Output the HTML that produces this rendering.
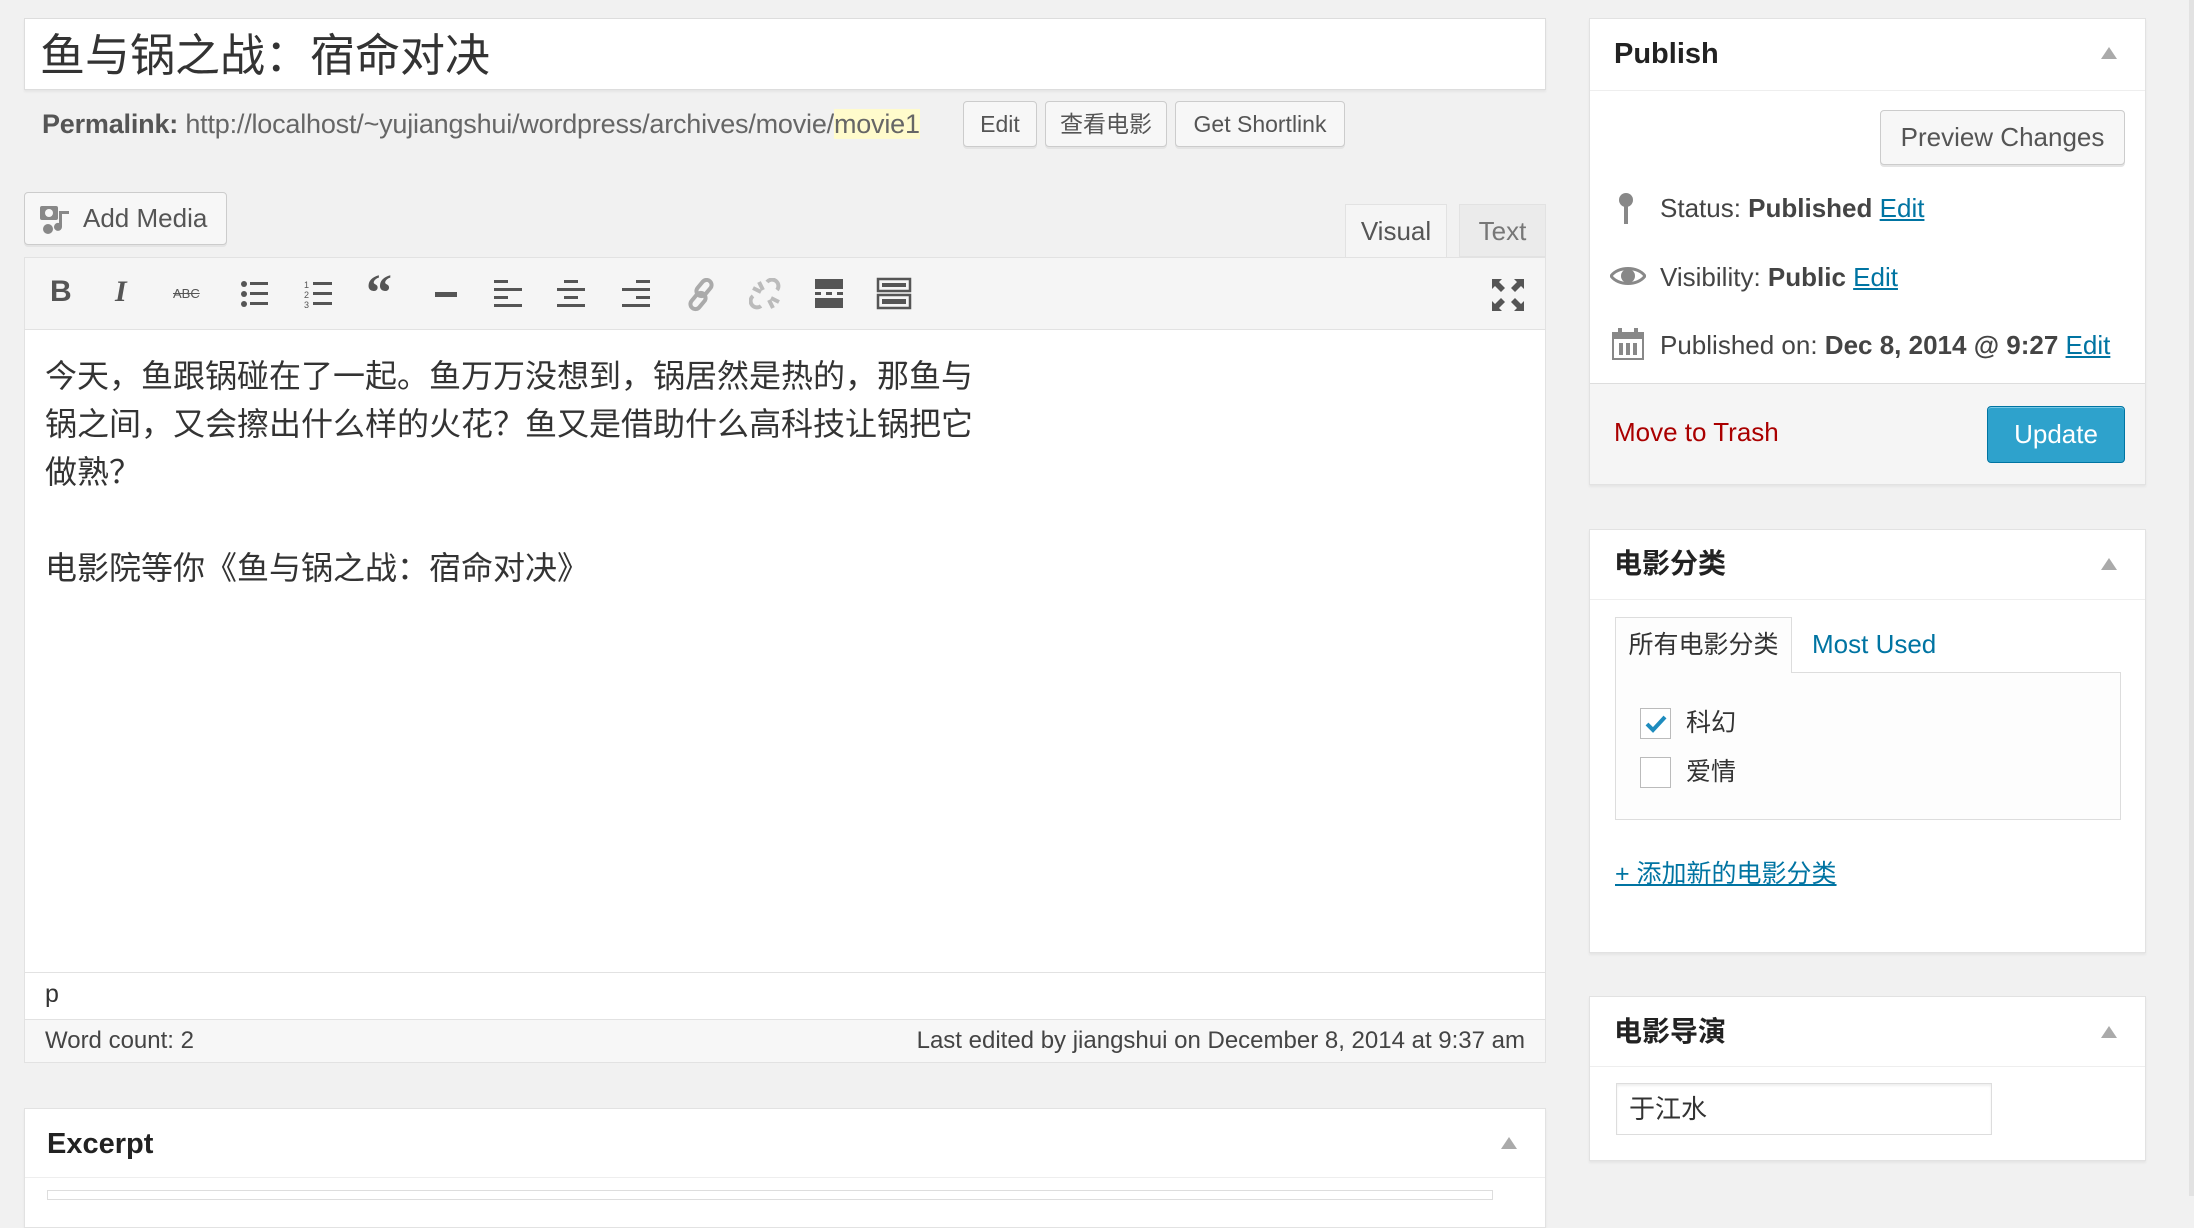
<!DOCTYPE html>
<html><head><meta charset="utf-8"><style>
*{box-sizing:border-box;margin:0;padding:0}
body{width:2194px;height:1196px;background:#f1f1f1;position:relative;overflow:hidden;font-family:"Liberation Sans","Noto Sans CJK SC",sans-serif;color:#444}
.a{position:absolute}
.box{position:absolute;background:#fff;border:1px solid #e2e2e2;box-shadow:0 2px 2px rgba(0,0,0,.05)}
.btn{position:absolute;background:#f7f7f7;border:1px solid #ccc;border-radius:4px;box-shadow:0 2px 0 #e4e4e4;color:#555;font-size:23px;text-align:center}
.ic{position:absolute;top:276px}
a{color:#0074a2;text-decoration:underline}
.tri{position:absolute;width:0;height:0;border-left:8px solid transparent;border-right:8px solid transparent;border-bottom:12px solid #aaa}
</style></head><body>

<div class="box" style="left:24px;top:18px;width:1522px;height:72px;border-color:#ddd"></div>
<div class="a" style="left:40px;top:26px;font-size:45px;color:#333;line-height:60px">鱼与锅之战：宿命对决</div>

<div class="a" style="left:42px;top:106px;font-size:27px;line-height:36px;color:#666;white-space:nowrap;letter-spacing:-0.2px"><b style="color:#555">Permalink:</b> http://localhost/~yujiangshui/wordpress/archives/movie/<span style="background:#fffbcc">movie1</span></div>
<div class="btn" style="left:963px;top:101px;width:74px;height:46px;line-height:44px">Edit</div>
<div class="btn" style="left:1045px;top:101px;width:122px;height:46px;line-height:44px">查看电影</div>
<div class="btn" style="left:1175px;top:101px;width:170px;height:46px;line-height:44px">Get Shortlink</div>

<div class="btn" style="left:24px;top:192px;width:203px;height:53px;line-height:51px;font-size:26px;text-align:left;padding-left:58px">Add Media</div>
<svg class="a" style="left:38px;top:203px" width="36" height="34" viewBox="0 0 36 34"><rect x="2" y="3" width="18" height="14" rx="2" fill="#888"/><circle cx="11" cy="10" r="4" fill="#f7f7f7"/><path d="M24 8v16a4 4 0 1 1-3-4V8h10v3h-7z" fill="#888"/><circle cx="10" cy="26" r="5" fill="#888"/></svg>

<div class="a" style="left:1345px;top:204px;width:102px;height:54px;background:#f5f5f5;border:1px solid #e2e2e2;border-bottom:none;font-size:26px;line-height:52px;text-align:center;color:#555">Visual</div>
<div class="a" style="left:1459px;top:204px;width:87px;height:53px;background:#ebebeb;border:1px solid #e2e2e2;font-size:26px;line-height:52px;text-align:center;color:#777">Text</div>

<div class="a" style="left:24px;top:257px;width:1522px;height:806px;border:1px solid #e2e2e2;background:#fff"></div>
<div class="a" style="left:25px;top:258px;width:1520px;height:72px;background:#f5f5f5;border-bottom:1px solid #e2e2e2"></div>
<div class="ic" style="left:50px;font:bold 30px 'Liberation Sans';color:#555;top:275px">B</div>
<div class="ic" style="left:115px;font:italic bold 30px 'Liberation Serif';color:#555;top:275px">I</div>
<div class="ic" style="left:173px;font:13px 'Liberation Sans';color:#555;top:286px;text-decoration:line-through">ABC</div>
<svg class="ic" style="left:240px;top:279px" width="30" height="30"><g fill="#555"><circle cx="4" cy="5" r="3"/><circle cx="4" cy="15" r="3"/><circle cx="4" cy="25" r="3"/><rect x="10" y="3" width="18" height="3"/><rect x="10" y="13" width="18" height="3"/><rect x="10" y="23" width="18" height="3"/></g></svg>
<svg class="ic" style="left:304px;top:279px" width="30" height="30"><g fill="#555"><text x="0" y="9" font-size="9" font-family="Liberation Sans">1</text><text x="0" y="19" font-size="9" font-family="Liberation Sans">2</text><text x="0" y="29" font-size="9" font-family="Liberation Sans">3</text><rect x="9" y="3" width="19" height="3"/><rect x="9" y="13" width="19" height="3"/><rect x="9" y="23" width="19" height="3"/></g></svg>
<div class="ic" style="left:366px;font:bold 52px 'Liberation Serif';color:#555;top:268px;line-height:52px">“</div>
<div class="a" style="left:435px;top:292px;width:22px;height:5px;background:#555"></div>
<svg class="ic" style="left:494px;top:279px" width="30" height="30"><g fill="#555"><rect x="0" y="1" width="14" height="3"/><rect x="0" y="9" width="28" height="3"/><rect x="0" y="17" width="14" height="3"/><rect x="0" y="25" width="28" height="3"/></g></svg>
<svg class="ic" style="left:557px;top:279px" width="30" height="30"><g fill="#555"><rect x="7" y="1" width="14" height="3"/><rect x="0" y="9" width="28" height="3"/><rect x="7" y="17" width="14" height="3"/><rect x="0" y="25" width="28" height="3"/></g></svg>
<svg class="ic" style="left:622px;top:279px" width="30" height="30"><g fill="#555"><rect x="14" y="1" width="14" height="3"/><rect x="0" y="9" width="28" height="3"/><rect x="14" y="17" width="14" height="3"/><rect x="0" y="25" width="28" height="3"/></g></svg>
<svg class="ic" style="left:685px;top:278px" width="34" height="34" viewBox="0 0 34 34"><g fill="none" stroke="#aaa" stroke-width="4"><rect x="14" y="1" width="10" height="18" rx="5" transform="rotate(40 19 10)"/><rect x="8" y="14" width="10" height="18" rx="5" transform="rotate(40 13 23)"/></g></svg>
<svg class="ic" style="left:749px;top:278px" width="34" height="34" viewBox="0 0 34 34"><g fill="none" stroke="#bbb" stroke-width="4"><path d="M18 4a6 6 0 0 1 10 8M4 18a6 6 0 0 0 8 10M10 4l4 8M24 30l-4-8M4 10l8 4M30 24l-8-4"/></g></svg>
<svg class="ic" style="left:815px;top:279px" width="30" height="30"><g fill="#555"><rect x="0" y="0" width="28" height="10"/><rect x="0" y="13" width="6" height="3"/><rect x="11" y="13" width="6" height="3"/><rect x="22" y="13" width="6" height="3"/><rect x="0" y="19" width="28" height="10"/></g></svg>
<svg class="ic" style="left:876px;top:277px" width="36" height="34"><g fill="none" stroke="#555" stroke-width="2.5"><rect x="2" y="2" width="32" height="12"/><rect x="2" y="18" width="32" height="13"/></g><g fill="#555"><rect x="6" y="6" width="24" height="4"/><rect x="6" y="22" width="24" height="5"/></g></svg>
<svg class="ic" style="left:1492px;top:279px" width="32" height="32" viewBox="0 0 32 32"><g fill="#555"><path d="M0 0h10l-3 3 6 6-4 4-6-6-3 3zM32 0v10l-3-3-6 6-4-4 6-6-3-3zM0 32v-10l3 3 6-6 4 4-6 6 3 3zM32 32h-10l3-3-6-6 4-4 6 6 3-3z"/></g></svg>

<div class="a" style="left:45px;top:352px;font-size:32px;line-height:48px;color:#333;white-space:nowrap">今天，鱼跟锅碰在了一起。鱼万万没想到，锅居然是热的，那鱼与<br>锅之间，又会擦出什么样的火花？鱼又是借助什么高科技让锅把它<br>做熟？<br><br>电影院等你《鱼与锅之战：宿命对决》</div>

<div class="a" style="left:25px;top:972px;width:1520px;height:47px;border-top:1px solid #e2e2e2;background:#fff;font-size:25px;line-height:42px;padding-left:20px;color:#333">p</div>
<div class="a" style="left:25px;top:1019px;width:1520px;height:43px;border-top:1px solid #e2e2e2;background:#f7f7f7;font-size:24px;line-height:42px;color:#444">
<span style="position:absolute;left:20px">Word count: 2</span><span style="position:absolute;right:20px">Last edited by jiangshui on December 8, 2014 at 9:37 am</span></div>

<div class="box" style="left:24px;top:1108px;width:1522px;height:120px"></div>
<div class="a" style="left:25px;top:1177px;width:1520px;height:1px;background:#eee"></div>
<div class="a" style="left:47px;top:1124px;font-size:29px;font-weight:bold;color:#222;line-height:40px">Excerpt</div>
<div class="tri" style="left:1501px;top:1137px"></div>
<div class="a" style="left:47px;top:1190px;width:1446px;height:10px;border:1px solid #ddd"></div>

<div class="box" style="left:1589px;top:18px;width:557px;height:467px"></div>
<div class="a" style="left:1590px;top:90px;width:555px;height:1px;background:#eee"></div>
<div class="a" style="left:1614px;top:34px;font-size:29px;font-weight:bold;color:#222;line-height:40px">Publish</div>
<div class="tri" style="left:2101px;top:47px"></div>
<div class="btn" style="left:1880px;top:110px;width:245px;height:55px;line-height:53px;font-size:26px">Preview Changes</div>
<svg class="a" style="left:1616px;top:192px" width="20" height="34"><circle cx="10" cy="8" r="7" fill="#888"/><rect x="8" y="12" width="4" height="20" fill="#888"/></svg>
<div class="a" style="left:1660px;top:190px;font-size:26px;line-height:36px;color:#444">Status: <b>Published</b> <a>Edit</a></div>
<svg class="a" style="left:1610px;top:264px" width="36" height="24" viewBox="0 0 36 24"><path d="M1 12C8 2 28 2 35 12 28 22 8 22 1 12z" fill="none" stroke="#888" stroke-width="3"/><circle cx="18" cy="12" r="7" fill="#888"/></svg>
<div class="a" style="left:1660px;top:259px;font-size:26px;line-height:36px;color:#444">Visibility: <b>Public</b> <a>Edit</a></div>
<svg class="a" style="left:1612px;top:328px" width="32" height="32"><rect x="1" y="5" width="30" height="26" fill="none" stroke="#888" stroke-width="2"/><rect x="1" y="5" width="30" height="6" fill="#888"/><rect x="6" y="0" width="4" height="8" fill="#888"/><rect x="22" y="0" width="4" height="8" fill="#888"/><rect x="7" y="15" width="4" height="12" fill="#888"/><rect x="14" y="15" width="4" height="12" fill="#888"/><rect x="21" y="15" width="4" height="12" fill="#888"/></svg>
<div class="a" style="left:1660px;top:327px;font-size:26px;line-height:36px;color:#444;white-space:nowrap">Published on: <b>Dec 8, 2014 @ 9:27</b> <a>Edit</a></div>
<div class="a" style="left:1590px;top:383px;width:555px;height:101px;background:#f5f5f5;border-top:1px solid #ddd"></div>
<div class="a" style="left:1614px;top:414px;font-size:26px;line-height:36px;color:#a00">Move to Trash</div>
<div class="a" style="left:1987px;top:406px;width:138px;height:57px;background:#2ea2cc;border:1px solid #0074a2;border-radius:4px;color:#fff;font-size:26px;line-height:55px;text-align:center;box-shadow:inset 0 1px 0 #78c8e6">Update</div>

<div class="box" style="left:1589px;top:529px;width:557px;height:424px"></div>
<div class="a" style="left:1590px;top:599px;width:555px;height:1px;background:#eee"></div>
<div class="a" style="left:1614px;top:544px;font-size:28px;font-weight:bold;color:#222;line-height:40px">电影分类</div>
<div class="tri" style="left:2101px;top:558px"></div>
<div class="a" style="left:1615px;top:672px;width:506px;height:148px;background:#fdfdfd;border:1px solid #ddd"></div>
<div class="a" style="left:1615px;top:617px;width:177px;height:56px;background:#fdfdfd;border:1px solid #ddd;border-bottom:none;font-size:25px;line-height:54px;text-align:center;color:#333">所有电影分类</div>
<div class="a" style="left:1812px;top:624px;font-size:26px;line-height:40px;color:#0074a2">Most Used</div>
<div class="a" style="left:1640px;top:708px;width:31px;height:31px;border:1px solid #bbb;background:#fff"></div>
<svg class="a" style="left:1644px;top:714px" width="24" height="20"><path d="M3 10l6 6L21 3" fill="none" stroke="#1e8cbe" stroke-width="4"/></svg>
<div class="a" style="left:1686px;top:705px;font-size:25px;line-height:36px;color:#333">科幻</div>
<div class="a" style="left:1640px;top:757px;width:31px;height:31px;border:1px solid #bbb;background:#fff"></div>
<div class="a" style="left:1686px;top:754px;font-size:25px;line-height:36px;color:#333">爱情</div>
<div class="a" style="left:1615px;top:856px;font-size:25px;line-height:36px"><a style="color:#0074a2">+ 添加新的电影分类</a></div>

<div class="box" style="left:1589px;top:996px;width:557px;height:165px"></div>
<div class="a" style="left:1590px;top:1066px;width:555px;height:1px;background:#eee"></div>
<div class="a" style="left:1614px;top:1012px;font-size:28px;font-weight:bold;color:#222;line-height:40px">电影导演</div>
<div class="tri" style="left:2101px;top:1026px"></div>
<div class="a" style="left:1616px;top:1083px;width:376px;height:52px;border:1px solid #ddd;box-shadow:inset 0 2px 2px rgba(0,0,0,.07);background:#fff;font-size:26px;line-height:50px;padding-left:12px;color:#333">于江水</div>

<div class="a" style="left:2189px;top:0;width:5px;height:1196px;background:#e2e2e2"></div>
</body></html>
